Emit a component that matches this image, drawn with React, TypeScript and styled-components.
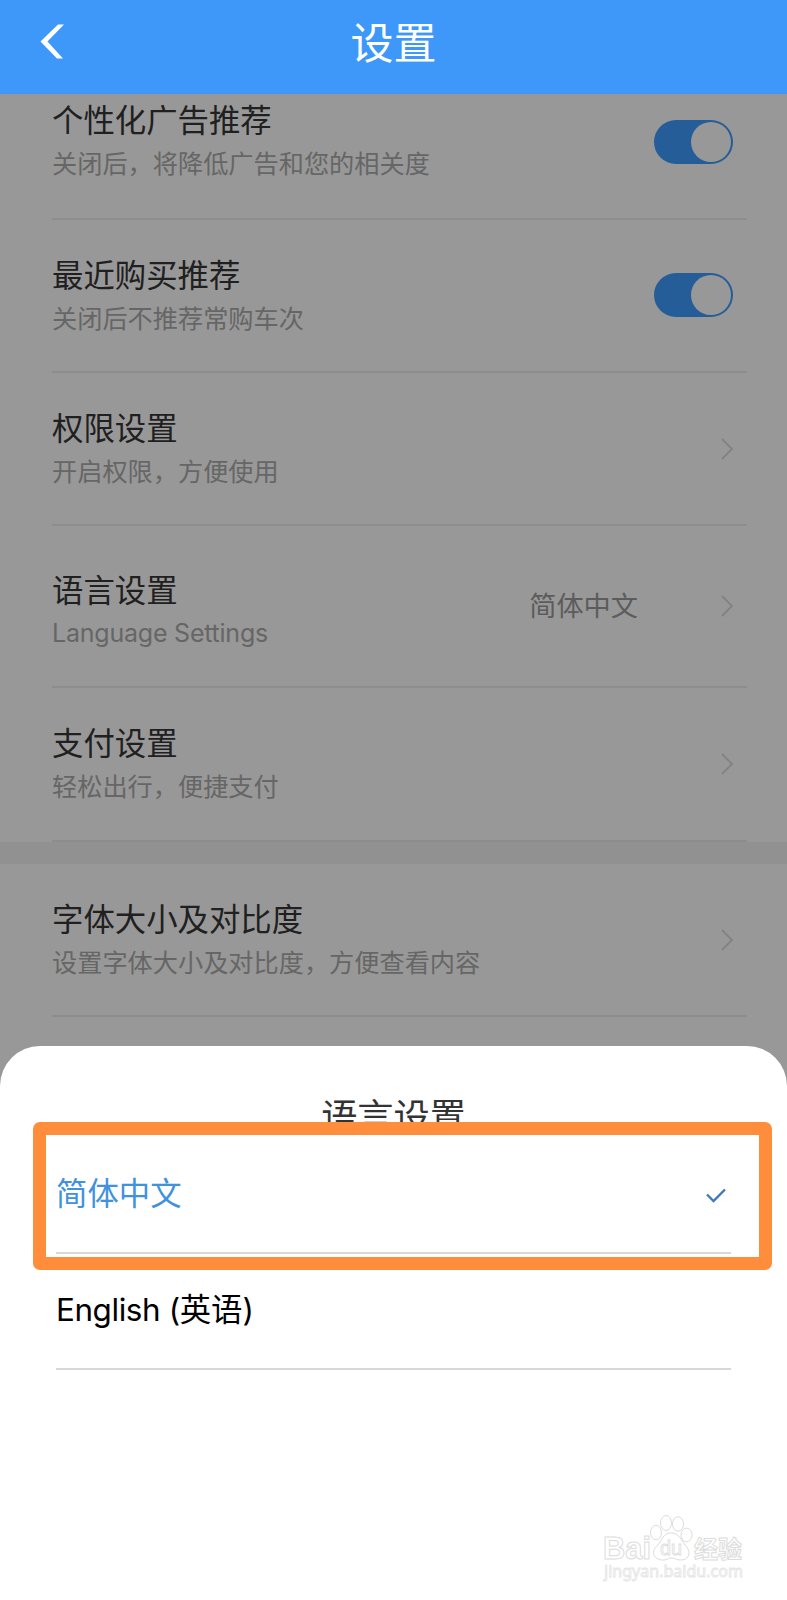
import React from 'react';
import styled, { createGlobalStyle } from 'styled-components';

const GlobalStyle = createGlobalStyle`
  *, *::before, *::after { box-sizing: border-box; }
  body {
    margin: 0;
    background: #989898;
    font-family: "Noto Sans CJK SC", sans-serif;
  }
`;

const Page = styled.main`
  width: 787px;
  height: 1600px;
  display: flex;
  flex-direction: column;
  background: #989898;
  overflow: hidden;
`;

const Header = styled.header`
  flex: none;
  height: 94px;
  padding: 0 40px;
  display: grid;
  grid-template-columns: 60px 1fr 60px;
  align-items: center;
  background: #3d98fa;
`;

const BackButton = styled.button`
  width: 26px;
  height: 36px;
  margin: 0 0 10px;
  padding: 0;
  border: 0;
  background: none;
  svg { display: block; }
`;

const HeaderTitle = styled.h1`
  margin: 0;
  padding-bottom: 14px;
  text-align: center;
  color: #fff;
  font-size: 43px;
  line-height: 60px;
  font-weight: 400;
`;

const List = styled.section`
  flex: none;
  height: 952px;
  display: flex;
  flex-direction: column;
  justify-content: flex-start;
  overflow: hidden;
`;

const Row = styled.div<{ $height?: number; $clip?: number }>`
  flex: none;
  height: ${(p) => p.$height ?? 153}px;
  margin: ${(p) => -(p.$clip ?? 0)}px 40px 0 52px;
  padding-right: 14px;
  display: flex;
  align-items: center;
  border-bottom: 2px solid #8d8d8d;
`;

const Labels = styled.div<{ $top?: number }>`
  flex: 1;
  align-self: flex-start;
  padding-top: ${(p) => p.$top ?? 32}px;
`;

const Title = styled.div`
  color: #202020;
  font-size: 31.4px;
  line-height: 44px;
  white-space: nowrap;
`;

const Subtitle = styled.div`
  color: #666;
  font-size: 25.2px;
  line-height: 42px;
  white-space: nowrap;
`;

const LatinSubtitle = styled(Subtitle)`
  font-family: Inter, sans-serif;
  font-size: 25px;
  line-height: 44px;
  letter-spacing: -0.22px;
`;

const Value = styled.span`
  margin-right: 83px;
  padding-bottom: 5px;
  color: #5c5c5c;
  font-size: 27.2px;
  line-height: 40px;
`;

const Switch = styled.span`
  width: 79px;
  height: 44px;
  margin-bottom: 2px;
  padding: 2px;
  display: flex;
  justify-content: flex-end;
  border-radius: 22px;
  background: #245d98;
  &::after {
    content: "";
    width: 40px;
    height: 40px;
    border-radius: 50%;
    background: #989898;
  }
`;

const Chevron = styled.svg`
  display: block;
  width: 12px;
  height: 22px;
`;

const Band = styled.div`
  flex: none;
  height: 22px;
  background: #919191;
`;

const Sheet = styled.section`
  flex: 1;
  position: relative;
  padding: 40px 56px 0;
  border-radius: 40px 40px 0 0;
  background: #fff;
`;

const SheetTitle = styled.h2`
  margin: 0;
  height: 52px;
  text-align: center;
  color: #333;
  font-size: 36.2px;
  line-height: 57px;
  font-weight: 400;
`;

const Option = styled.div<{ $active?: boolean }>`
  height: 116px;
  padding: 0 5px 0 0;
  display: flex;
  align-items: center;
  justify-content: space-between;
  border-bottom: 2px solid #d8d8da;
  color: ${(p) => (p.$active ? '#4091de' : '#000')};
  font-size: 31.4px;
`;

const OptionLabel = styled.span`
  padding-bottom: 8px;
`;

const Latin = styled.span`
  font-family: Inter, sans-serif;
  letter-spacing: -0.4px;
`;

const Highlight = styled.div`
  position: absolute;
  left: 33px;
  top: 76px;
  width: 739px;
  height: 148px;
  border: 13px solid #ff8d3c;
  border-radius: 7px;
`;

const Watermark = styled.svg`
  position: absolute;
  right: 40px;
  bottom: 10px;
  width: 144px;
  height: 78px;
`;

const Arrow = () => (
  <Chevron viewBox="0 0 12 22" fill="none" stroke="#828282" strokeWidth="1.8">
    <path d="M1 1 L11 11 L1 21" />
  </Chevron>
);

export default function App() {
  return (
    <>
      <GlobalStyle />
      <Page>
        <Header>
          <BackButton aria-label="返回">
            <svg width="26" height="36" viewBox="0 0 26 36">
              <path d="M18 0.5 H24 L7.5 17.5 L23 34.5 H17 L0.5 17.5 Z" fill="#fff" />
            </svg>
          </BackButton>
          <HeaderTitle>设置</HeaderTitle>
        </Header>

        <List>
          <Row $clip={27}>
            <Labels $top={30}>
              <Title>个性化广告推荐</Title>
              <Subtitle>关闭后，将降低广告和您的相关度</Subtitle>
            </Labels>
            <Switch />
          </Row>
          <Row>
            <Labels>
              <Title>最近购买推荐</Title>
              <Subtitle>关闭后不推荐常购车次</Subtitle>
            </Labels>
            <Switch />
          </Row>
          <Row>
            <Labels>
              <Title>权限设置</Title>
              <Subtitle>开启权限，方便使用</Subtitle>
            </Labels>
            <Arrow />
          </Row>
          <Row $height={162}>
            <Labels $top={41}>
              <Title>语言设置</Title>
              <LatinSubtitle>Language Settings</LatinSubtitle>
            </Labels>
            <Value>简体中文</Value>
            <Arrow />
          </Row>
          <Row $height={154}>
            <Labels>
              <Title>支付设置</Title>
              <Subtitle>轻松出行，便捷支付</Subtitle>
            </Labels>
            <Arrow />
          </Row>
          <Band />
          <Row>
            <Labels>
              <Title>字体大小及对比度</Title>
              <Subtitle>设置字体大小及对比度，方便查看内容</Subtitle>
            </Labels>
            <Arrow />
          </Row>
        </List>

        <Sheet>
          <SheetTitle>语言设置</SheetTitle>
          <Option $active>
            <OptionLabel>简体中文</OptionLabel>
            <svg width="20" height="15" viewBox="0 0 20 15" fill="none" stroke="#3f78b8" strokeWidth="2.3">
              <path d="M1 6.5 L7.5 13 L19 1.5" />
            </svg>
          </Option>
          <Option>
            <OptionLabel>
              <Latin>English (</Latin>英语<Latin>)</Latin>
            </OptionLabel>
          </Option>
          <Highlight />
          <Watermark viewBox="0 0 144 78" fill="#fff" stroke="#dcdcdc" strokeWidth="1">
            <text x="0" y="47" fontFamily="Liberation Sans" fontWeight="700" fontSize="32" textLength="48" lengthAdjust="spacingAndGlyphs">Bai</text>
            <ellipse cx="53" cy="20.5" rx="5.5" ry="7.2" />
            <ellipse cx="63" cy="11" rx="5.5" ry="7.5" />
            <ellipse cx="75" cy="12" rx="5.5" ry="7.2" />
            <ellipse cx="83.5" cy="23" rx="5.5" ry="6.8" />
            <path d="M68 21 C60 21 59 28 55 33 C47 39 50 48 60 48 C65 48 65 46 68 46 C72 46 73 48 78 48 C87 48 88 39 83 34 C78 29 77 21 68 21 Z" />
            <text x="57" y="43" fontFamily="Liberation Sans" fontSize="20" textLength="22" strokeWidth="0.8">du</text>
            <text x="91" y="46" fontFamily="Noto Sans CJK SC" fontWeight="700" fontSize="24" textLength="48">经验</text>
            <text x="1" y="65" fontFamily="Noto Sans" fontSize="16" textLength="139" lengthAdjust="spacingAndGlyphs" stroke="#e4e4e4" strokeWidth="0.8">jingyan.baidu.com</text>
          </Watermark>
        </Sheet>
      </Page>
    </>
  );
}
